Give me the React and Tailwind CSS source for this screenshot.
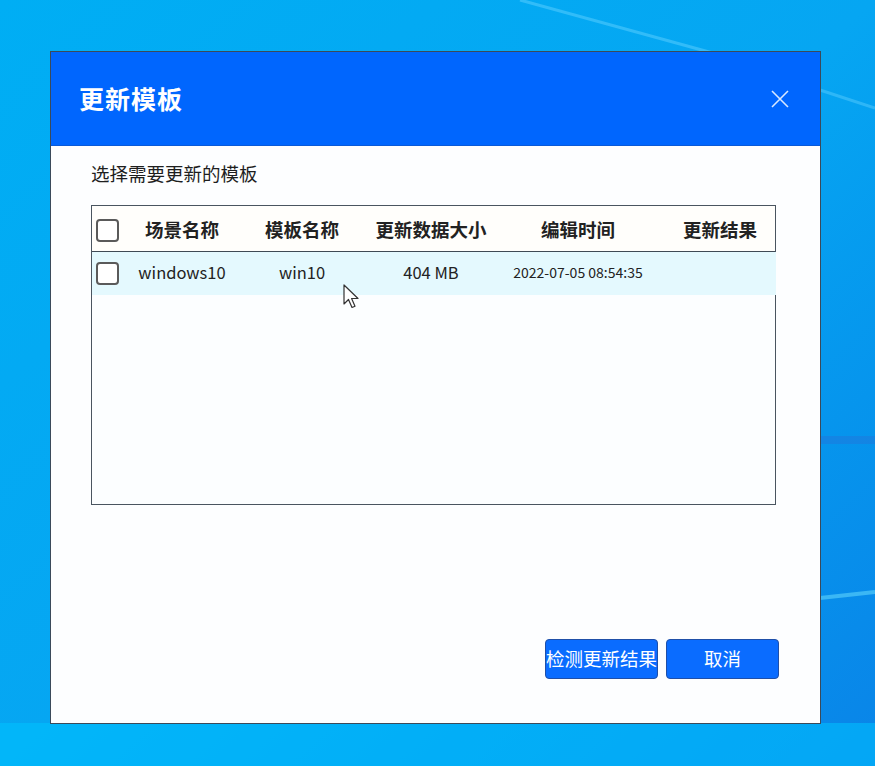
import React from 'react';

const font = { fontFamily: '"Noto Sans CJK SC", "Noto Sans", sans-serif' };

const Checkbox = () => (
  <div className="w-[23px] h-[23px] rounded-[4px] border-2 border-[#5a5a5a] bg-white" />
);

const headers = ['场景名称', '模板名称', '更新数据大小', '编辑时间', '更新结果'];
const cols = 'grid grid-cols-[40px_100px_140px_118px_176px_108px_1fr] items-center';

const rows = [
  { scene: 'windows10', template: 'win10', size: '404 MB', time: '2022-07-05 08:54:35', result: '' },
];

export default function App() {
  return (
    <div
      className="relative w-full h-[766px] overflow-hidden bg-gradient-to-br from-[#00aef4] via-[#06a6f2] to-[#0a84e8]"
      style={font}
    >
      {/* desktop light streaks */}
      <svg className="absolute inset-0 w-full h-full" viewBox="0 0 875 766" preserveAspectRatio="none">
        <line x1="520" y1="0" x2="720" y2="55" stroke="#5fd0ff" strokeWidth="3" opacity="0.5" />
        <line x1="820" y1="90" x2="875" y2="108" stroke="#5fd0ff" strokeWidth="3" opacity="0.45" />
        <rect x="820" y="436" width="55" height="8" fill="#1a7fe0" opacity="0.7" />
        <line x1="820" y1="598" x2="875" y2="592" stroke="#6fe2ff" strokeWidth="4" opacity="0.5" />
        <rect x="0" y="723" width="875" height="43" fill="#00c2ff" opacity="0.55" />
      </svg>

      <div className="relative pt-[51px] pl-[50px]">
        <div className="w-[771px] h-[673px] border border-[#3b4a5a] bg-[#fdfeff] flex flex-col">
          {/* header */}
          <div className="h-[94px] bg-[#0066fe] flex items-center justify-between pl-[28px] pr-[28px] border-b border-[#0a5ad8]">
            <span className="text-white text-[25px] font-bold tracking-[1px]">更新模板</span>
            <svg width="20" height="20" viewBox="0 0 20 20" className="mr-[2px]">
              <path d="M2 2 L18 18 M18 2 L2 18" stroke="#d8e8ff" strokeWidth="1.6" />
            </svg>
          </div>

          <div className="flex-1 flex flex-col px-[40px]">
            <div className="mt-[13px] text-[18.5px] text-[#1e1e1e] leading-[28px]">选择需要更新的模板</div>

            {/* table */}
            <div className="mt-[18px] w-[685px] h-[300px] border border-[#4a5560] bg-[#fcfeff]">
              <div className={`${cols} h-[46px] pt-[3px] border-b border-[#3f4a55] bg-[#fffefb]`}>
                <div className="pl-[4px]"><Checkbox /></div>
                {headers.map((h) => (
                  <div key={h} className="text-center text-[18.5px] font-bold text-[#222] whitespace-nowrap">{h}</div>
                ))}
              </div>
              {rows.map((r) => (
                <div key={r.scene} className={`${cols} h-[43px] pb-[3px] bg-[#e4f9fe] mr-[-1px]`}>
                  <div className="pl-[4px] pt-[3px]"><Checkbox /></div>
                  <div className="text-center text-[16.5px] text-[#222]">{r.scene}</div>
                  <div className="text-center text-[16.5px] text-[#222]">{r.template}</div>
                  <div className="text-center text-[16.5px] text-[#222]">{r.size}</div>
                  <div className="text-center text-[14px] text-[#222] whitespace-nowrap">{r.time}</div>
                  <div className="text-center text-[16px] text-[#222]">{r.result}</div>
                  <div />
                </div>
              ))}
            </div>

            <div className="flex-1" />

            {/* buttons */}
            <div className="flex justify-end gap-[8px] mr-[1px] mb-[44px]">
              <button className="w-[113px] h-[40px] rounded-[4px] bg-[#0a6cff] border border-[#1f4fa8] text-white text-[18.5px] whitespace-nowrap flex items-center justify-center overflow-visible">
                检测更新结果
              </button>
              <button className="w-[113px] h-[40px] rounded-[4px] bg-[#0a6cff] border border-[#1f4fa8] text-white text-[18.5px] flex items-center justify-center">
                取消
              </button>
            </div>
          </div>
        </div>
      </div>

      {/* mouse pointer */}
      <svg className="absolute left-[343px] top-[284px]" width="18" height="26" viewBox="0 0 18 26">
        <path d="M1 1 L1 20 L5.5 15.5 L9 23.5 L12 22.2 L8.6 14.5 L15 14.5 Z" fill="#fff" stroke="#333" strokeWidth="1.2" strokeLinejoin="round" />
      </svg>
    </div>
  );
}
